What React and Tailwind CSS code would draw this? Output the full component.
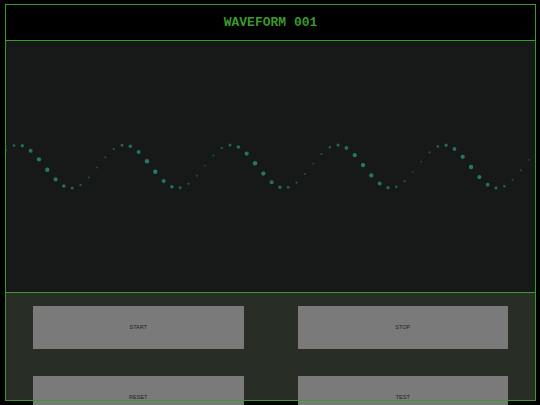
import React from "react";

// sine wave of dots, computed in page pixel coordinates
const dots = Array.from({ length: 64 }, (_, i) => {
  const x = 5.7 + 8.31 * i;
  const phase = (2 * Math.PI * (x - 18)) / 106.5;
  const y = 166.5 - 21.5 * Math.cos(phase);
  const s = Math.sin(phase);
  return { x, y, r: 1.55 + 0.65 * s, o: 0.8 + 0.2 * s };
});

const buttons = ["START", "STOP", "RESET", "TEST"];

export default function App() {
  return (
    <div className="min-h-[405px] w-[540px] overflow-hidden bg-black pt-[4px]">
      <div className="relative ml-[5px] flex h-[397px] w-[531px] flex-col p-px">
        <div className="flex h-[36px] shrink-0 items-center justify-center border-b border-[#3a9a2c] bg-black">
          <h1 className="font-['Liberation_Mono',monospace] text-[13px] font-bold text-[#3a9a2c]">
            WAVEFORM 001
          </h1>
        </div>

        <div className="h-[252px] shrink-0 border-b border-[#3a9a2c] bg-[#161917]">
          <svg width="529" height="251" viewBox="6 41 529 251" className="block">
            {dots.map((d, i) => (
              <circle key={i} cx={d.x} cy={d.y} r={d.r} fill="#24796d" opacity={d.o} />
            ))}
          </svg>
        </div>

        <div className="grid h-[107px] shrink-0 grid-cols-2 gap-x-[54px] gap-y-[27px] bg-[#282e26] px-[27px] pt-[13px]">
          {buttons.map((b) => (
            <button
              key={b}
              className="flex h-[43px] items-center justify-center bg-[#7a7a7a] font-['Liberation_Sans',sans-serif] text-[5.5px] text-[#222]"
            >
              {b}
            </button>
          ))}
        </div>

        <div className="pointer-events-none absolute inset-0 border border-[#3a9a2c]" />
      </div>
    </div>
  );
}
